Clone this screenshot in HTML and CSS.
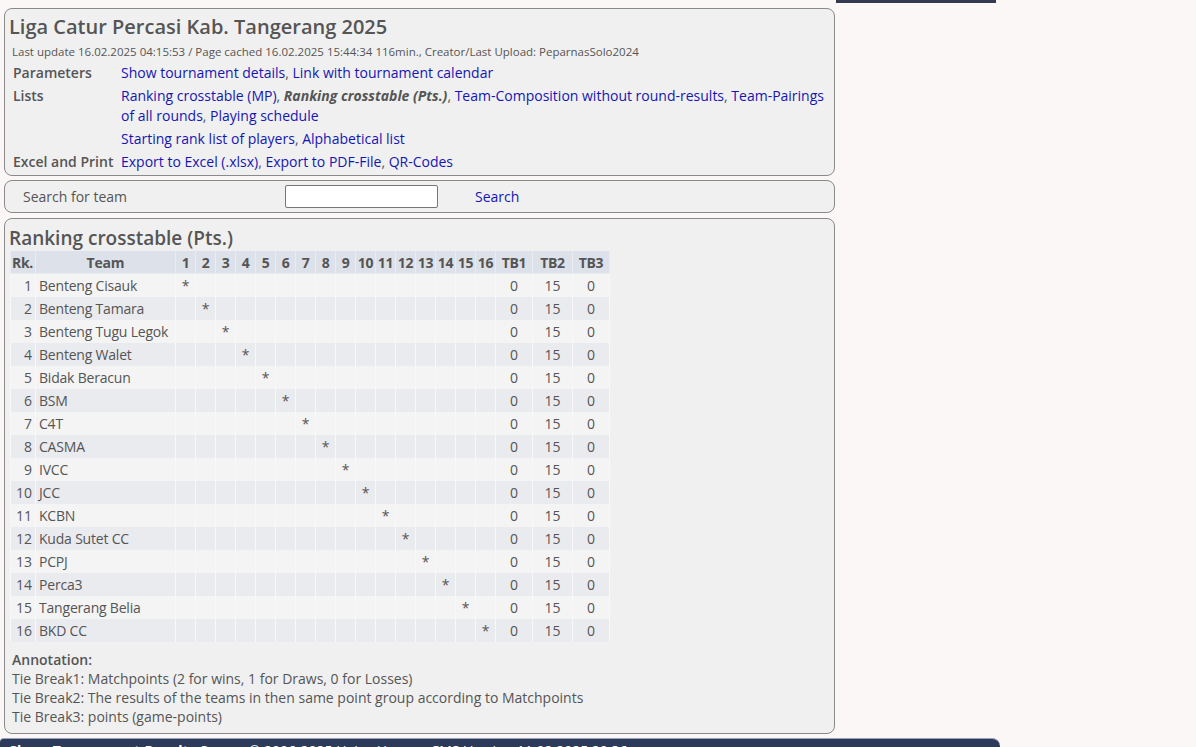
FILE: index.html
```html
<!DOCTYPE html>
<html lang="en">
<head>
    <meta charset="utf-8">
    <title>Liga Catur Percasi Kab. Tangerang 2025</title>
    <link rel="stylesheet" href="styles.css">
</head>
<body>
    <div class="page">
        <div class="main">
            <div class="box headBox">
                <h2 class="title">Liga Catur Percasi Kab. Tangerang 2025</h2>
                <div class="stamp">Last update 16.02.2025 04:15:53 / Page cached 16.02.2025 15:44:34 116min., Creator/Last Upload: PeparnasSolo2024</div>
                <table class="menu">
                    <tr>
                        <td class="lbl">Parameters</td>
                        <td><a href="#">Show tournament details</a>, <a href="#">Link with tournament calendar</a></td>
                    </tr>
                    <tr>
                        <td class="lbl">Lists</td>
                        <td><a href="#">Ranking crosstable (MP)</a>, <b class="cur">Ranking crosstable (Pts.)</b>, <a href="#">Team-Composition without round-results</a>, <a href="#">Team-Pairings of all rounds</a>, <a href="#">Playing schedule</a></td>
                    </tr>
                    <tr>
                        <td class="lbl"></td>
                        <td><a href="#">Starting rank list of players</a>, <a href="#">Alphabetical list</a></td>
                    </tr>
                    <tr>
                        <td class="lbl">Excel and Print</td>
                        <td><a href="#">Export to Excel (.xlsx)</a>, <a href="#">Export to PDF-File</a>, <a href="#">QR-Codes</a></td>
                    </tr>
                </table>
            </div>

            <div class="box searchBox">
                <span class="searchLbl">Search for team</span>
                <input type="text" class="searchInput">
                <a href="#" class="searchBtn">Search</a>
            </div>

            <div class="box tableBox">
                <h3 class="title2">Ranking crosstable (Pts.)</h3>
                <table class="cross" id="cross">
                    <thead>
                        <tr>
                            <th class="rk">Rk.</th>
                            <th class="team">Team</th>
                            <th>1</th><th>2</th><th>3</th><th>4</th><th>5</th><th>6</th><th>7</th><th>8</th>
                            <th>9</th><th>10</th><th>11</th><th>12</th><th>13</th><th>14</th><th>15</th><th>16</th>
                            <th class="tb">TB1</th><th class="tb tb2">TB2</th><th class="tb">TB3</th>
                        </tr>
                    </thead>
                    <tbody id="rows"></tbody>
                </table>
                <div class="notes">
                    <b>Annotation:</b><br>
                    Tie Break1: Matchpoints (2 for wins, 1 for Draws, 0 for Losses)<br>
                    Tie Break2: The results of the teams in then same point group according to Matchpoints<br>
                    Tie Break3: points (game-points)
                </div>
            </div>
        </div>
        <div class="side">
            <div class="sideBar"></div>
        </div>
    </div>
    <div class="footer"><b>Chess-Tournament-Results-Server</b> © 2006-2025 Heinz Herzog, CMS-Version 11.02.2025 20:36</div>

    <script>
        const teams = ['Benteng Cisauk', 'Benteng Tamara', 'Benteng Tugu Legok', 'Benteng Walet', 'Bidak Beracun',
            'BSM', 'C4T', 'CASMA', 'IVCC', 'JCC', 'KCBN', 'Kuda Sutet CC', 'PCPJ', 'Perca3', 'Tangerang Belia', 'BKD CC'];
        const tbody = document.getElementById('rows');
        teams.forEach((name, i) => {
            const tr = document.createElement('tr');
            tr.className = i % 2 === 0 ? 'odd' : 'even';
            let html = `<td class="rk">${i + 1}</td><td class="team">${name}</td>`;
            for (let j = 0; j < 16; j++) {
                html += `<td class="res">${j === i ? '*' : ''}</td>`;
            }
            html += '<td class="tb">0</td><td class="tb">15</td><td class="tb">0</td>';
            tr.innerHTML = html;
            tbody.appendChild(tr);
        });
    </script>
</body>
</html>
```

FILE: styles.css
```css
body {
    margin: 0;
    background-color: #faf7f6;
    font-family: "Open Sans", "Noto Sans", sans-serif;
    font-size: 14px;
    color: #555;
}

a {
    color: #1515b4;
    text-decoration: none;
}

.page {
    display: flex;
    width: 1000px;
}
.main {
    width: 831px;
    margin-left: 4px;
    padding-top: 8px;
}
.side {
    width: 160px;
    margin-left: 1px;
}
.sideBar {
    height: 3px;
    background-color: #343a52;
}

.box {
    background-color: #f0f0f0;
    border: 1px solid #8a8a8a;
    border-radius: 8px;
    box-sizing: border-box;
}

.headBox {
    height: 168px;
    padding: 4px 6px 0 4px;
}
.title {
    margin: 0;
    font-size: 20px;
    font-weight: 600;
    line-height: 28px;
}
.stamp {
    font-size: 11.5px;
    line-height: 16px;
    margin: 3px 0 2px 3px;
}
.menu {
    border-collapse: collapse;
    margin-left: 2px;
}
.menu td {
    padding: 1px 2px 2px 2px;
    line-height: 20px;
    vertical-align: top;
}
.menu .lbl {
    font-weight: 600;
    white-space: nowrap;
    width: 104px;
}
.cur {
    font-style: italic;
}

.searchBox {
    margin-top: 4px;
    height: 33px;
    display: flex;
    align-items: center;
    padding-left: 18px;
}
.searchLbl {
    width: 262px;
}
.searchInput {
    width: 153px;
    height: 23px;
    box-sizing: border-box;
    border: 1px solid #767676;
    border-radius: 2px;
    background: #fff;
    margin: 0;
}
.searchBtn {
    margin-left: 37px;
}

.tableBox {
    margin-top: 5px;
    height: 516px;
    padding: 6px 4px 0 4px;
}
.title2 {
    margin: 0;
    font-size: 19px;
    font-weight: 600;
    line-height: 26px;
}
.cross {
    border-collapse: collapse;
    margin-left: 1px;
    table-layout: fixed;
}
.cross th {
    background-color: #dde1e9;
    font-weight: 700;
    height: 22px;
    padding: 0;
    border: 1px solid #e9ecf1;
    border-top: none;
    white-space: nowrap;
    letter-spacing: -0.3px;
}
.cross td {
    height: 22px;
    padding: 0;
    border: 1px solid #f8f8f8;
    border-top: none;
    border-bottom: none;
    white-space: nowrap;
}
.cross tr.odd td {
    background-color: #f4f4f4;
}
.cross tr.even td {
    background-color: #eaebef;
}
.cross tbody tr {
    height: 23px;
}
.cross .rk {
    width: 21px;
    text-align: right;
    padding-right: 3px;
}
.cross th.rk {
    text-align: left;
    padding: 0 0 0 1px;
    width: 23px;
}
.cross .team {
    width: 136px;
    text-align: left;
    padding-left: 3px;
    letter-spacing: -0.2px;
}
.cross th.team {
    text-align: center;
    padding-left: 0;
    width: 139px;
}
.cross th, .cross .res {
    width: 19px;
    text-align: center;
}
.cross .tb {
    width: 36px;
    text-align: center;
}
.cross .tb2 {
    width: 39px;
}

.notes {
    margin: 8px 0 0 3px;
    line-height: 19px;
}
.notes b {
    font-weight: 600;
}

.footer {
    width: 1000px;
    margin-top: 4px;
    height: 30px;
    box-sizing: border-box;
    background-color: #2c3a5c;
    color: #fff;
    border-top: 1px solid #9aa0b8;
    border-top-right-radius: 8px;
    border-top-left-radius: 4px;
    padding: 2px 8px;
    font-size: 14px;
}
```
